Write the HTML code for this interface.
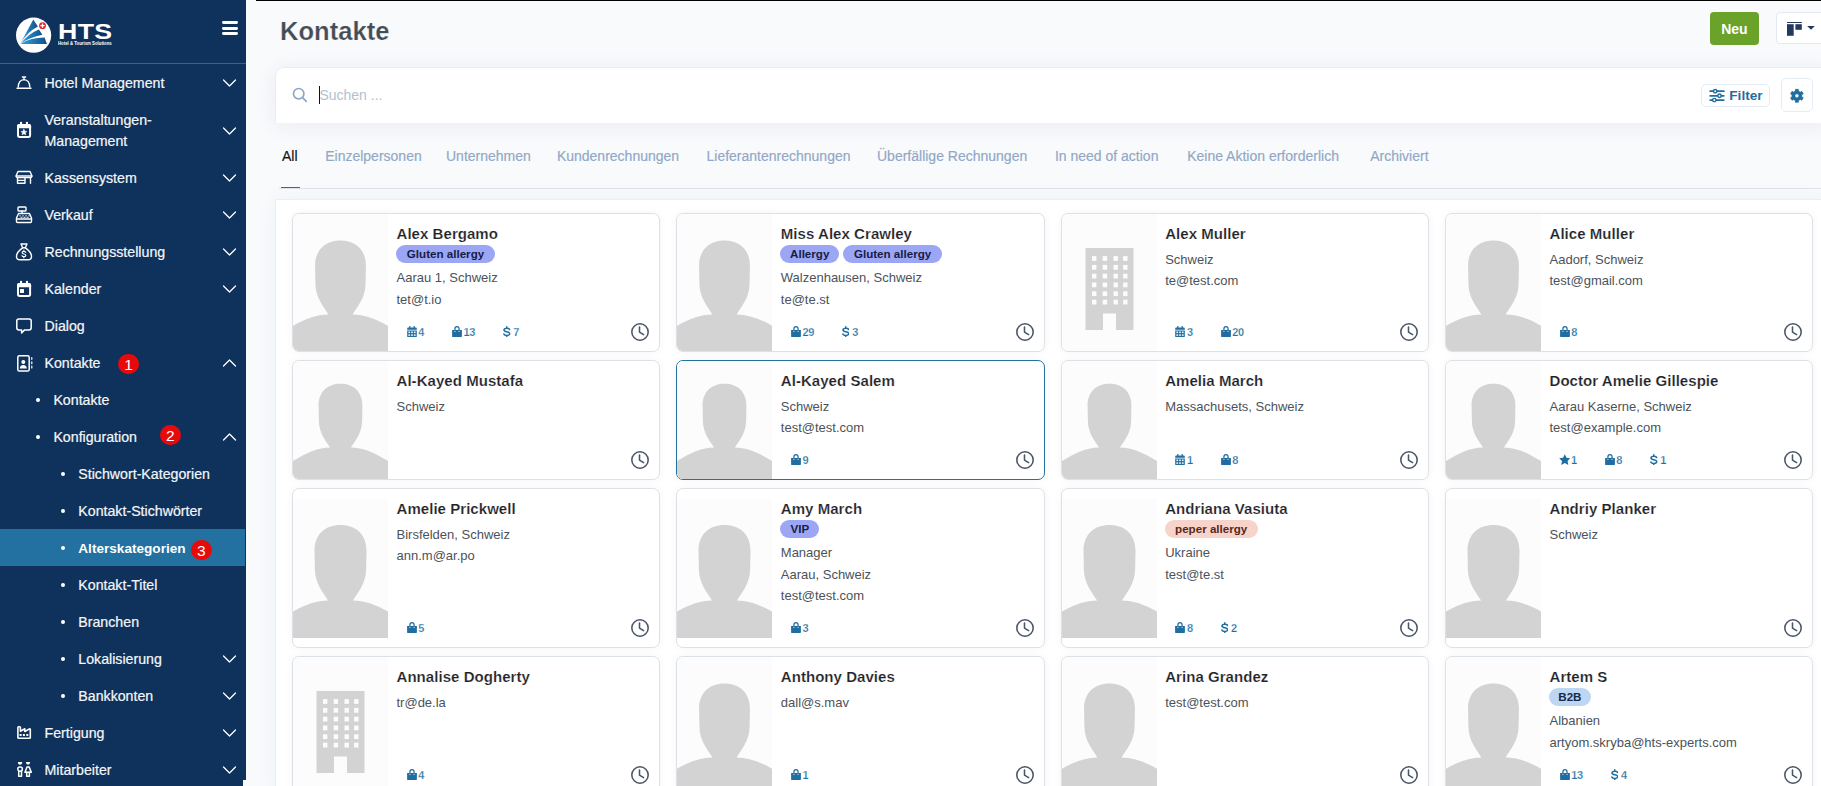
<!DOCTYPE html>
<html><head><meta charset="utf-8"><title>Kontakte</title>
<style>
html,body{margin:0;padding:0}
body{width:1821px;height:786px;overflow:hidden;position:relative;background:#f8fafc;font-family:"Liberation Sans", sans-serif}
.t{position:absolute;line-height:1;white-space:nowrap;font-family:"Liberation Sans", sans-serif}
</style></head><body>
<div style="position:absolute;left:0;top:0;width:246px;height:780px;background:#0f325c"></div>
<div style="position:absolute;left:0;top:780px;width:243px;height:6px;background:#0f325c"></div>
<div style="position:absolute;left:0;top:63px;width:246px;height:1px;background:rgba(255,255,255,0.22)"></div>
<svg style="position:absolute;left:0;top:0" width="130" height="63" viewBox="0 0 130 63">
<defs><linearGradient id="lg" x1="0" x2="1" y1="0" y2="0"><stop offset="0" stop-color="#36a3e0"/><stop offset="1" stop-color="#0f4f8a"/></linearGradient></defs>
<circle cx="33.6" cy="35.2" r="17.6" fill="#fff"/>
<path d="M20.4 43.4 L33.3 19.6 L37.9 26.6 Q27.5 32 20.4 43.4 Z" fill="url(#lg)"/>
<path d="M20.8 43.5 Q29 33.5 38.9 29.6 L42.4 34.8 Q29.5 37.5 20.8 43.5 Z" fill="url(#lg)"/>
<path d="M20.3 43.9 Q31 37.6 44.6 37.6 L46.9 43.9 Z" fill="url(#lg)"/>
<circle cx="42.5" cy="25.7" r="3.4" fill="#e3262b"/>
<path d="M42.5 23.6 V27.8 M40.4 25.7 H44.6" stroke="#fff" stroke-width="1.3"/>
</svg>
<div class="t" style="left:57.5px;top:21.4px;font-size:22px;font-weight:700;color:#fff;transform:scaleX(1.215);transform-origin:0 0;letter-spacing:0.3px">HTS</div>
<div class="t" style="left:57.7px;top:41.0px;font-size:5px;font-weight:700;color:#fff;transform:scaleX(0.86);transform-origin:0 0;white-space:nowrap">Hotel &amp; Tourism Solutions</div>
<div style="position:absolute;left:222px;top:21.2px;width:16px;height:2.8px;border-radius:1.4px;background:#fff"></div>
<div style="position:absolute;left:222px;top:26.8px;width:16px;height:2.8px;border-radius:1.4px;background:#fff"></div>
<div style="position:absolute;left:222px;top:32.4px;width:16px;height:2.8px;border-radius:1.4px;background:#fff"></div>
<div style="position:absolute;left:0;top:529px;width:245px;height:37px;background:#2371a0"></div>
<div class="t" style="left:44.50px;top:76.08px;font-size:14.2px;color:#f4f6f9;font-weight:400;-webkit-text-stroke:0.2px #f4f6f9">Hotel Management</div>
<svg style="position:absolute;left:222px;top:78.1px" width="15" height="10" viewBox="0 0 15 10" fill="none" stroke="#fff" stroke-width="1.4" stroke-linecap="round" stroke-linejoin="round"><path d="M1.5 2 L7.5 8 L13.5 2" stroke-width="1.25"/></svg>
<div class="t" style="left:44.50px;top:112.98px;font-size:14.2px;color:#f4f6f9;font-weight:400;-webkit-text-stroke:0.2px #f4f6f9">Veranstaltungen-</div>
<div class="t" style="left:44.50px;top:133.78px;font-size:14.2px;color:#f4f6f9;font-weight:400;-webkit-text-stroke:0.2px #f4f6f9">Management</div>
<div class="t" style="left:44.50px;top:171.18px;font-size:14.2px;color:#f4f6f9;font-weight:400;-webkit-text-stroke:0.2px #f4f6f9">Kassensystem</div>
<svg style="position:absolute;left:222px;top:173.2px" width="15" height="10" viewBox="0 0 15 10" fill="none" stroke="#fff" stroke-width="1.4" stroke-linecap="round" stroke-linejoin="round"><path d="M1.5 2 L7.5 8 L13.5 2" stroke-width="1.25"/></svg>
<div class="t" style="left:44.50px;top:207.98px;font-size:14.2px;color:#f4f6f9;font-weight:400;-webkit-text-stroke:0.2px #f4f6f9">Verkauf</div>
<svg style="position:absolute;left:222px;top:210.0px" width="15" height="10" viewBox="0 0 15 10" fill="none" stroke="#fff" stroke-width="1.4" stroke-linecap="round" stroke-linejoin="round"><path d="M1.5 2 L7.5 8 L13.5 2" stroke-width="1.25"/></svg>
<div class="t" style="left:44.50px;top:245.08px;font-size:14.2px;color:#f4f6f9;font-weight:400;-webkit-text-stroke:0.2px #f4f6f9">Rechnungsstellung</div>
<svg style="position:absolute;left:222px;top:247.10000000000002px" width="15" height="10" viewBox="0 0 15 10" fill="none" stroke="#fff" stroke-width="1.4" stroke-linecap="round" stroke-linejoin="round"><path d="M1.5 2 L7.5 8 L13.5 2" stroke-width="1.25"/></svg>
<div class="t" style="left:44.50px;top:282.08px;font-size:14.2px;color:#f4f6f9;font-weight:400;-webkit-text-stroke:0.2px #f4f6f9">Kalender</div>
<svg style="position:absolute;left:222px;top:284.1px" width="15" height="10" viewBox="0 0 15 10" fill="none" stroke="#fff" stroke-width="1.4" stroke-linecap="round" stroke-linejoin="round"><path d="M1.5 2 L7.5 8 L13.5 2" stroke-width="1.25"/></svg>
<div class="t" style="left:44.50px;top:319.08px;font-size:14.2px;color:#f4f6f9;font-weight:400;-webkit-text-stroke:0.2px #f4f6f9">Dialog</div>
<div class="t" style="left:44.50px;top:356.08px;font-size:14.2px;color:#f4f6f9;font-weight:400;-webkit-text-stroke:0.2px #f4f6f9">Kontakte</div>
<svg style="position:absolute;left:222px;top:358.1px" width="15" height="10" viewBox="0 0 15 10" fill="none" stroke="#fff" stroke-width="1.4" stroke-linecap="round" stroke-linejoin="round"><path d="M1.5 8 L7.5 2 L13.5 8" stroke-width="1.25"/></svg>
<div class="t" style="left:53.40px;top:392.98px;font-size:14.2px;color:#f4f6f9;font-weight:400;-webkit-text-stroke:0.2px #f4f6f9">Kontakte</div>
<div style="position:absolute;left:36.2px;top:398.1px;width:3.8px;height:3.8px;border-radius:50%;background:#fff"></div>
<div class="t" style="left:53.40px;top:429.98px;font-size:14.2px;color:#f4f6f9;font-weight:400;-webkit-text-stroke:0.2px #f4f6f9">Konfiguration</div>
<svg style="position:absolute;left:222px;top:432.0px" width="15" height="10" viewBox="0 0 15 10" fill="none" stroke="#fff" stroke-width="1.4" stroke-linecap="round" stroke-linejoin="round"><path d="M1.5 8 L7.5 2 L13.5 8" stroke-width="1.25"/></svg>
<div style="position:absolute;left:36.2px;top:435.1px;width:3.8px;height:3.8px;border-radius:50%;background:#fff"></div>
<div class="t" style="left:78.30px;top:466.98px;font-size:14.2px;color:#f4f6f9;font-weight:400;-webkit-text-stroke:0.2px #f4f6f9">Stichwort-Kategorien</div>
<div style="position:absolute;left:61.2px;top:472.1px;width:3.8px;height:3.8px;border-radius:50%;background:#fff"></div>
<div class="t" style="left:78.30px;top:503.98px;font-size:14.2px;color:#f4f6f9;font-weight:400;-webkit-text-stroke:0.2px #f4f6f9">Kontakt-Stichwörter</div>
<div style="position:absolute;left:61.2px;top:509.1px;width:3.8px;height:3.8px;border-radius:50%;background:#fff"></div>
<div class="t" style="left:78.30px;top:542.29px;font-size:13.6px;color:#ffffff;font-weight:700;">Alterskategorien</div>
<div style="position:absolute;left:61.2px;top:546.1px;width:3.8px;height:3.8px;border-radius:50%;background:#fff"></div>
<div class="t" style="left:78.30px;top:577.98px;font-size:14.2px;color:#f4f6f9;font-weight:400;-webkit-text-stroke:0.2px #f4f6f9">Kontakt-Titel</div>
<div style="position:absolute;left:61.2px;top:583.1px;width:3.8px;height:3.8px;border-radius:50%;background:#fff"></div>
<div class="t" style="left:78.30px;top:614.98px;font-size:14.2px;color:#f4f6f9;font-weight:400;-webkit-text-stroke:0.2px #f4f6f9">Branchen</div>
<div style="position:absolute;left:61.2px;top:620.1px;width:3.8px;height:3.8px;border-radius:50%;background:#fff"></div>
<div class="t" style="left:78.30px;top:651.98px;font-size:14.2px;color:#f4f6f9;font-weight:400;-webkit-text-stroke:0.2px #f4f6f9">Lokalisierung</div>
<svg style="position:absolute;left:222px;top:654.0px" width="15" height="10" viewBox="0 0 15 10" fill="none" stroke="#fff" stroke-width="1.4" stroke-linecap="round" stroke-linejoin="round"><path d="M1.5 2 L7.5 8 L13.5 2" stroke-width="1.25"/></svg>
<div style="position:absolute;left:61.2px;top:657.1px;width:3.8px;height:3.8px;border-radius:50%;background:#fff"></div>
<div class="t" style="left:78.30px;top:688.98px;font-size:14.2px;color:#f4f6f9;font-weight:400;-webkit-text-stroke:0.2px #f4f6f9">Bankkonten</div>
<svg style="position:absolute;left:222px;top:691.0px" width="15" height="10" viewBox="0 0 15 10" fill="none" stroke="#fff" stroke-width="1.4" stroke-linecap="round" stroke-linejoin="round"><path d="M1.5 2 L7.5 8 L13.5 2" stroke-width="1.25"/></svg>
<div style="position:absolute;left:61.2px;top:694.1px;width:3.8px;height:3.8px;border-radius:50%;background:#fff"></div>
<div class="t" style="left:44.50px;top:726.08px;font-size:14.2px;color:#f4f6f9;font-weight:400;-webkit-text-stroke:0.2px #f4f6f9">Fertigung</div>
<svg style="position:absolute;left:222px;top:728.1px" width="15" height="10" viewBox="0 0 15 10" fill="none" stroke="#fff" stroke-width="1.4" stroke-linecap="round" stroke-linejoin="round"><path d="M1.5 2 L7.5 8 L13.5 2" stroke-width="1.25"/></svg>
<div class="t" style="left:44.50px;top:763.18px;font-size:14.2px;color:#f4f6f9;font-weight:400;-webkit-text-stroke:0.2px #f4f6f9">Mitarbeiter</div>
<svg style="position:absolute;left:222px;top:765.2px" width="15" height="10" viewBox="0 0 15 10" fill="none" stroke="#fff" stroke-width="1.4" stroke-linecap="round" stroke-linejoin="round"><path d="M1.5 2 L7.5 8 L13.5 2" stroke-width="1.25"/></svg>
<svg style="position:absolute;left:222px;top:125.5px" width="15" height="10" viewBox="0 0 15 10" fill="none" stroke="#fff" stroke-width="1.4" stroke-linecap="round" stroke-linejoin="round"><path d="M1.5 2 L7.5 8 L13.5 2" stroke-width="1.25"/></svg>
<svg style="position:absolute;left:15px;top:75px" width="18" height="16" viewBox="0 0 18 16" fill="none" stroke="#fff" stroke-width="1.4" stroke-linecap="round" stroke-linejoin="round"><path d="M2 13.2 H16"/><path d="M3.2 12 Q3.5 5 9 4.6 Q14.5 5 14.8 12"/><path d="M7.4 2 H10.6 M9 2 V4.5"/></svg>
<svg style="position:absolute;left:15px;top:120px" width="18" height="19" viewBox="0 0 18 19" fill="none" stroke="#fff" stroke-width="1.4" stroke-linecap="round" stroke-linejoin="round"><rect x="3" y="5" width="12.1" height="11.9" rx="1.6" stroke-width="2"/><path d="M2 6.2 Q2 4 4.2 4 H13.9 Q16.1 4 16.1 6.2 V8.3 H2 Z" fill="#fff" stroke="none"/><rect x="5" y="1.9" width="2.1" height="2.6" fill="#fff" stroke="none"/><rect x="10.9" y="1.9" width="2.1" height="2.6" fill="#fff" stroke="none"/><path d="M8.9 9.3 L9.8 11.2 L11.9 11.4 L10.3 12.8 L10.8 14.9 L8.9 13.8 L7 14.9 L7.5 12.8 L5.9 11.4 L8 11.2 Z" fill="#fff" stroke="#fff" stroke-width="0.5"/></svg>
<svg style="position:absolute;left:15px;top:169px" width="18" height="17" viewBox="0 0 18 17" fill="none" stroke="#fff" stroke-width="1.4" stroke-linecap="round" stroke-linejoin="round"><path d="M3 2.5 H15 L17 7 H1 Z"/><path d="M1.2 7.2 Q1.2 8.6 2.6 8.6 H15.4 Q16.8 8.6 16.8 7.2"/><path d="M2.5 8.6 V14.2 H10 V8.6 M2.5 11.4 H10"/><path d="M15.5 8.6 V14.2"/></svg>
<svg style="position:absolute;left:15px;top:205px" width="18" height="19" viewBox="0 0 18 19" fill="none" stroke="#fff" stroke-width="1.4" stroke-linecap="round" stroke-linejoin="round"><rect x="3" y="2" width="8" height="4" rx="0.8"/><path d="M7 6 V8.2"/><path d="M3.5 8.5 H14.5 L16.5 13 V16.5 Q16.5 17.5 15.5 17.5 H2.5 Q1.5 17.5 1.5 16.5 V13 Z"/><path d="M1.5 14 H16.5"/><path d="M5 10.5 V11 M8 10.5 V11 M11 10.5 V11 M14 10.5 V11 M6 12.3 H7 M9 12.3 H10 M12 12.3 H13" stroke-width="1.1"/></svg>
<svg style="position:absolute;left:15px;top:242px" width="18" height="20" viewBox="0 0 18 20" fill="none" stroke="#fff" stroke-width="1.4" stroke-linecap="round" stroke-linejoin="round"><path d="M6 2 H12 L10.3 5.8 H7.7 Z"/><path d="M7.6 5.8 Q1.5 10 1.5 14.5 Q1.5 17.8 5 17.8 H13 Q16.5 17.8 16.5 14.5 Q16.5 10 10.4 5.8"/><path d="M8.9 8.2 V9.3 M8.9 14.7 V15.8 M10.7 10.4 Q10.4 9.3 8.9 9.3 Q7.1 9.3 7.1 10.6 Q7.1 11.7 8.9 12 Q10.8 12.3 10.8 13.5 Q10.8 14.7 8.9 14.7 Q7.3 14.7 7 13.6" stroke-width="1.2"/></svg>
<svg style="position:absolute;left:15px;top:279px" width="18" height="20" viewBox="0 0 18 20" fill="none" stroke="#fff" stroke-width="1.4" stroke-linecap="round" stroke-linejoin="round"><rect x="3" y="5" width="12.1" height="11.9" rx="1.6" stroke-width="2"/><path d="M2 6.2 Q2 4 4.2 4 H13.9 Q16.1 4 16.1 6.2 V8.3 H2 Z" fill="#fff" stroke="none"/><rect x="5" y="1.9" width="2.1" height="2.6" fill="#fff" stroke="none"/><rect x="10.9" y="1.9" width="2.1" height="2.6" fill="#fff" stroke="none"/><rect x="5" y="10" width="4" height="4" rx="0.5" fill="#fff" stroke="none"/></svg>
<svg style="position:absolute;left:15px;top:316px" width="19" height="20" viewBox="0 0 19 20" fill="none" stroke="#fff" stroke-width="1.4" stroke-linecap="round" stroke-linejoin="round"><path d="M3.9 2.9 H14.1 Q16.2 2.9 16.2 5 V11.8 Q16.2 13.9 14.1 13.9 H9.6 L6.6 16.9 V13.9 H3.9 Q1.8 13.9 1.8 11.8 V5 Q1.8 2.9 3.9 2.9 Z" stroke-width="1.5"/></svg>
<svg style="position:absolute;left:15px;top:354px" width="19" height="20" viewBox="0 0 19 20" fill="none" stroke="#fff" stroke-width="1.4" stroke-linecap="round" stroke-linejoin="round"><rect x="2.8" y="1.8" width="11.4" height="15.2" rx="1.6" stroke-width="1.5"/><circle cx="8.3" cy="8" r="2" fill="#fff" stroke="none"/><path d="M4.8 14.5 Q5 11 8.3 11 Q11.6 11 11.8 14.5 Z" fill="#fff" stroke="none"/><path d="M16.8 3.5 V5.3 M16.8 7.8 V9.7 M16.8 12.1 V14" stroke-width="1.2"/></svg>
<svg style="position:absolute;left:15px;top:724px" width="18" height="18" viewBox="0 0 18 18" fill="none" stroke="#fff" stroke-width="1.4" stroke-linecap="round" stroke-linejoin="round"><path d="M2.9 13.4 V3.6 Q2.9 2.8 3.7 2.8 H4.7 Q5.4 2.8 5.4 3.6 V7.2 L9.8 4.8 V7.5 L14.5 4.9 Q15.3 4.5 15.3 5.4 V13.4 Q15.3 14.3 14.4 14.3 H3.8 Q2.9 14.3 2.9 13.4 Z" stroke-width="1.6"/><rect x="4.6" y="10" width="2" height="2" fill="#fff" stroke="none"/><rect x="7.9" y="10" width="2" height="2" fill="#fff" stroke="none"/><rect x="11.3" y="10" width="2" height="2" fill="#fff" stroke="none"/></svg>
<svg style="position:absolute;left:15px;top:760px" width="18" height="19" viewBox="0 0 18 19" fill="none" stroke="#fff" stroke-width="1.4" stroke-linecap="round" stroke-linejoin="round"><path d="M2.9 2.1 H7.2 Q7.2 4.8 5.05 4.8 Q2.9 4.8 2.9 2.1 Z M11 2.1 H15.1 Q15.1 4.8 13.05 4.8 Q11 4.8 11 2.1 Z" fill="#fff" stroke="none"/><rect x="2.8" y="6.9" width="4.6" height="4.3" rx="2.1" stroke-width="1.5"/><path d="M3.7 11.3 V16.3 H6.5 V11.3" stroke-width="1.5"/><path d="M12.1 6.9 H14.1 L16.3 12.2 H9.9 Z" stroke-width="1.5"/><path d="M11.7 12.3 V16.3 H14.4 V12.3" stroke-width="1.5"/></svg>
<div style="position:absolute;left:118.24999999999999px;top:353.7px;width:20.4px;height:20.6px;border-radius:50%;background:#e70a0a"></div><div class="t" style="left:124.15px;top:356.68px;font-size:15.5px;color:#fff;font-weight:400;">1</div>
<div style="position:absolute;left:160.20000000000002px;top:424.9px;width:20.4px;height:20.6px;border-radius:50%;background:#e70a0a"></div><div class="t" style="left:166.10px;top:427.88px;font-size:15.5px;color:#fff;font-weight:400;">2</div>
<div style="position:absolute;left:191.20000000000002px;top:539.6px;width:20.4px;height:20.6px;border-radius:50%;background:#e70a0a"></div><div class="t" style="left:197.10px;top:542.58px;font-size:15.5px;color:#fff;font-weight:400;">3</div>
<div style="position:absolute;left:256px;top:0;width:1565px;height:1px;background:#000"></div>
<div class="t" style="left:280.00px;top:19.11px;font-size:25.5px;color:#464c55;font-weight:700;-webkit-text-stroke:0.22px #f8fafc;letter-spacing:0.05px">Kontakte</div>
<div style="position:absolute;left:1710px;top:12px;width:49px;height:33px;border-radius:4px;background:#6aa22a"></div>
<div class="t" style="left:1721.20px;top:21.95px;font-size:14px;color:#fff;font-weight:700;">Neu</div>
<div style="position:absolute;left:1775.5px;top:12.3px;width:60px;height:31.5px;border:1px solid #e3e9f2;border-radius:4px;background:#fff;box-sizing:border-box"></div>
<svg style="position:absolute;left:1786px;top:21px" width="30" height="16" viewBox="0 0 30 16"><rect x="1" y="1" width="14.8" height="1" fill="#233a5e"/><rect x="1" y="3.2" width="6.7" height="11.6" fill="#233a5e"/><rect x="9.4" y="3.2" width="6.4" height="5.6" fill="#233a5e"/><path d="M21.2 5 H28.8 L25 8.8 Z" fill="#233a5e"/></svg>
<div style="position:absolute;left:274.6px;top:67.0px;width:1560px;height:55.8px;background:#fff;border:1px solid #e8edf5;border-bottom:none;border-radius:9px 9px 0 0;box-sizing:border-box;box-shadow:0 3px 22px rgba(40,60,110,0.07)"></div>
<svg style="position:absolute;left:290px;top:85px" width="20" height="20" viewBox="0 0 20 20" fill="none" stroke="#8fa6c8" stroke-width="1.7" stroke-linecap="round"><circle cx="8.7" cy="8.7" r="5.2"/><path d="M12.6 12.6 L16.2 16.4"/></svg>
<div style="position:absolute;left:319px;top:86px;width:1.3px;height:18px;background:#111"></div>
<div class="t" style="left:319.40px;top:87.95px;font-size:14px;color:#b3bfcf;font-weight:400;">Suchen ...</div>
<div style="position:absolute;left:1701.3px;top:84.2px;width:69.2px;height:23.3px;border:1px solid #e6ecf5;border-radius:5px;box-sizing:border-box;background:#fff"></div>
<svg style="position:absolute;left:1708px;top:87px" width="18" height="18" viewBox="0 0 18 18" fill="none" stroke="#1f6e9f" stroke-width="1.8" stroke-linecap="round"><path d="M2.2 4.2 H5.4 M9 4.2 H15.8 M2.2 8.8 H9.7 M13.3 8.8 H15.8 M2.2 13.1 H4.5 M8.1 13.1 H15.8"/><circle cx="7.2" cy="4.2" r="1.75" stroke-width="1.4"/><circle cx="11.5" cy="8.8" r="1.75" stroke-width="1.4"/><circle cx="6.3" cy="13.1" r="1.75" stroke-width="1.4"/></svg>
<div class="t" style="left:1729.30px;top:88.89px;font-size:13.6px;color:#1f6e9f;font-weight:700;">Filter</div>
<div style="position:absolute;left:1781.2px;top:78.3px;width:31.6px;height:34.2px;border:1px solid #e6ecf5;border-radius:5px;box-sizing:border-box;background:#fff"></div>
<div class="t" style="left:282.00px;top:148.65px;font-size:14px;color:#111111;font-weight:400;-webkit-text-stroke:0.15px #111111">All</div>
<div class="t" style="left:325.20px;top:148.65px;font-size:14px;color:#91a7c6;font-weight:400;-webkit-text-stroke:0.15px #91a7c6">Einzelpersonen</div>
<div class="t" style="left:446.00px;top:148.65px;font-size:14px;color:#91a7c6;font-weight:400;-webkit-text-stroke:0.15px #91a7c6">Unternehmen</div>
<div class="t" style="left:556.90px;top:148.65px;font-size:14px;color:#91a7c6;font-weight:400;-webkit-text-stroke:0.15px #91a7c6">Kundenrechnungen</div>
<div class="t" style="left:706.50px;top:148.65px;font-size:14px;color:#91a7c6;font-weight:400;-webkit-text-stroke:0.15px #91a7c6">Lieferantenrechnungen</div>
<div class="t" style="left:877.00px;top:148.65px;font-size:14px;color:#91a7c6;font-weight:400;-webkit-text-stroke:0.15px #91a7c6">Überfällige Rechnungen</div>
<div class="t" style="left:1054.90px;top:148.65px;font-size:14px;color:#91a7c6;font-weight:400;-webkit-text-stroke:0.15px #91a7c6">In need of action</div>
<div class="t" style="left:1187.20px;top:148.65px;font-size:14px;color:#91a7c6;font-weight:400;-webkit-text-stroke:0.15px #91a7c6">Keine Aktion erforderlich</div>
<div class="t" style="left:1370.20px;top:148.65px;font-size:14px;color:#91a7c6;font-weight:400;-webkit-text-stroke:0.15px #91a7c6">Archiviert</div>
<div style="position:absolute;left:279px;top:188px;width:1542px;height:1px;background:#dfe4ea"></div>
<div style="position:absolute;left:281px;top:186.8px;width:19px;height:1.6px;background:#2472a6"></div>
<div style="position:absolute;left:274.7px;top:199.4px;width:1560px;height:600px;background:#fff;border:1px solid #eaeff6;box-sizing:border-box;box-shadow:0 0 22px rgba(40,60,110,0.045)"></div>
<svg style="position:absolute;left:1787px;top:86px" width="20" height="20" viewBox="0 0 20 20"><path fill="#1f6e9f" fill-rule="evenodd" stroke="#1f6e9f" stroke-width="0.8" stroke-linejoin="round" d="M8.51 5.00 L8.46 3.36 L11.34 3.36 L11.29 5.00 L13.36 6.19 L14.76 5.33 L16.20 7.83 L14.76 8.61 L14.76 10.99 L16.20 11.77 L14.76 14.27 L13.36 13.41 L11.29 14.60 L11.34 16.24 L8.46 16.24 L8.51 14.60 L6.44 13.41 L5.04 14.27 L3.60 11.77 L5.04 10.99 L5.04 8.61 L3.60 7.83 L5.04 5.33 L6.44 6.19 Z M12.00 9.80 A2.1 2.1 0 1 0 7.80 9.80 A2.1 2.1 0 1 0 12.00 9.80 Z"/></svg>
<div style="position:absolute;left:292.00px;top:213.00px;width:368.25px;height:139.00px;border:1px solid #dce1e8;border-radius:7px;box-sizing:border-box;background:#fff;box-shadow:0 0 8px rgba(20,30,60,0.045)"></div>
<div style="position:absolute;left:293.00px;top:214.00px;width:95px;height:137.00px;background:#fcfcfc;overflow:hidden;border-radius:6px 0 0 6px"><svg width="95" height="137.00" viewBox="-48.540 0 97.080 140.000" style="display:block"><path d="M-26 53 C-26 36 -15 27 0 27 C15 27 26 36 26 53 L25.6 72 C25.2 86 17 95 12.4 102.6 C30 103 46 111 70 128 L70 160 L-70 160 L-70 128 C-46 111 -30 103 -12.4 102.6 C-17 95 -25.2 86 -25.6 72 Z" fill="#d3d3d3"/></svg></div>
<div class="t" style="left:396.50px;top:225.90px;font-size:15px;color:#1e2227;font-weight:700;-webkit-text-stroke:0.18px #fff;letter-spacing:0.05px">Alex Bergamo</div>
<div style="position:absolute;left:396.00px;top:244.70px;width:99.0px;height:18px;border-radius:9px;background:#9ba6f5"></div>
<div class="t" style="left:396.00px;top:244.70px;width:99.0px;text-align:center;line-height:18px;font-size:11.6px;color:#181c45;font-weight:700">Gluten allergy</div>
<div class="t" style="left:396.50px;top:271.40px;font-size:13px;color:#4c525a;font-weight:400;">Aarau 1, Schweiz</div>
<div class="t" style="left:396.50px;top:292.90px;font-size:13px;color:#4c525a;font-weight:400;">tet@t.io</div>
<svg style="position:absolute;left:406.50px;top:325.90px" width="10" height="11.5" viewBox="0 0 10 11.5"><path fill="#1f6e9f" d="M2.2 0 H3.4 V1.5 H6.6 V0 H7.8 V1.5 H8.8 Q9.8 1.5 9.8 2.5 V3.8 H0.2 V2.5 Q0.2 1.5 1.2 1.5 H2.2 Z M0.2 4.5 H9.8 V10.3 Q9.8 11.4 8.8 11.4 H1.2 Q0.2 11.4 0.2 10.3 Z"/><g fill="#eaf3f9"><rect x="1.4" y="5.5" width="1.7" height="1.6"/><rect x="4.15" y="5.5" width="1.7" height="1.6"/><rect x="6.9" y="5.5" width="1.7" height="1.6"/><rect x="1.4" y="8.3" width="1.7" height="1.6"/><rect x="4.15" y="8.3" width="1.7" height="1.6"/><rect x="6.9" y="8.3" width="1.7" height="1.6"/></g></svg>
<div class="t" style="left:418.20px;top:326.69px;font-size:11px;color:#1f6e9f;font-weight:700;letter-spacing:-0.4px;-webkit-text-stroke:0.25px #fff">4</div>
<svg style="position:absolute;left:451.90px;top:325.70px" width="10" height="11.6" viewBox="0 0 10 11.6"><path fill="none" stroke="#1f6e9f" stroke-width="1.25" d="M2.9 4.2 V2.9 Q2.9 0.65 5 0.65 Q7.1 0.65 7.1 2.9 V4.2"/><path fill="#1f6e9f" d="M0.1 4.1 H9.9 V10.1 Q9.9 11.5 8.5 11.5 H1.5 Q0.1 11.5 0.1 10.1 Z"/><circle cx="2.9" cy="5.4" r="0.6" fill="#cfe3ef"/><circle cx="7.1" cy="5.4" r="0.6" fill="#cfe3ef"/></svg>
<div class="t" style="left:463.60px;top:326.69px;font-size:11px;color:#1f6e9f;font-weight:700;letter-spacing:-0.4px;-webkit-text-stroke:0.25px #fff">13</div>
<svg style="position:absolute;left:503.00px;top:325.70px" width="7.6" height="11.6" viewBox="0 0 7.6 11.6"><path fill="none" stroke="#1f6e9f" stroke-width="1.5" stroke-linecap="round" d="M3.8 0.8 V2.2 M3.8 9.4 V10.8 M6.6 3.6 Q6.4 2.2 3.8 2.2 Q1 2.2 1 4 Q1 5.3 3.8 5.8 Q6.7 6.3 6.7 7.7 Q6.7 9.4 3.8 9.4 Q1.1 9.4 0.9 7.9"/></svg>
<div class="t" style="left:513.30px;top:326.69px;font-size:11px;color:#1f6e9f;font-weight:700;letter-spacing:-0.4px;-webkit-text-stroke:0.25px #fff">7</div>
<svg style="position:absolute;left:630.25px;top:322.00px" width="20" height="20" viewBox="0 0 20 20" fill="none" stroke="#4a5568" stroke-width="1.55" stroke-linecap="round" stroke-linejoin="round"><circle cx="10" cy="10" r="8.2"/><path d="M9.5 5 V10.1 L13.6 12.7"/></svg>
<div style="position:absolute;left:676.30px;top:213.00px;width:368.25px;height:139.00px;border:1px solid #dce1e8;border-radius:7px;box-sizing:border-box;background:#fff;box-shadow:0 0 8px rgba(20,30,60,0.045)"></div>
<div style="position:absolute;left:677.30px;top:214.00px;width:95px;height:137.00px;background:#fcfcfc;overflow:hidden;border-radius:6px 0 0 6px"><svg width="95" height="137.00" viewBox="-48.540 0 97.080 140.000" style="display:block"><path d="M-26 53 C-26 36 -15 27 0 27 C15 27 26 36 26 53 L25.6 72 C25.2 86 17 95 12.4 102.6 C30 103 46 111 70 128 L70 160 L-70 160 L-70 128 C-46 111 -30 103 -12.4 102.6 C-17 95 -25.2 86 -25.6 72 Z" fill="#d3d3d3"/></svg></div>
<div class="t" style="left:780.80px;top:225.90px;font-size:15px;color:#1e2227;font-weight:700;-webkit-text-stroke:0.18px #fff;letter-spacing:0.05px">Miss Alex Crawley</div>
<div style="position:absolute;left:780.30px;top:244.70px;width:58.8px;height:18px;border-radius:9px;background:#9ba6f5"></div>
<div class="t" style="left:780.30px;top:244.70px;width:58.8px;text-align:center;line-height:18px;font-size:11.6px;color:#181c45;font-weight:700">Allergy</div>
<div style="position:absolute;left:843.10px;top:244.70px;width:99.0px;height:18px;border-radius:9px;background:#9ba6f5"></div>
<div class="t" style="left:843.10px;top:244.70px;width:99.0px;text-align:center;line-height:18px;font-size:11.6px;color:#181c45;font-weight:700">Gluten allergy</div>
<div class="t" style="left:780.80px;top:271.40px;font-size:13px;color:#4c525a;font-weight:400;">Walzenhausen, Schweiz</div>
<div class="t" style="left:780.80px;top:292.90px;font-size:13px;color:#4c525a;font-weight:400;">te@te.st</div>
<svg style="position:absolute;left:790.80px;top:325.70px" width="10" height="11.6" viewBox="0 0 10 11.6"><path fill="none" stroke="#1f6e9f" stroke-width="1.25" d="M2.9 4.2 V2.9 Q2.9 0.65 5 0.65 Q7.1 0.65 7.1 2.9 V4.2"/><path fill="#1f6e9f" d="M0.1 4.1 H9.9 V10.1 Q9.9 11.5 8.5 11.5 H1.5 Q0.1 11.5 0.1 10.1 Z"/><circle cx="2.9" cy="5.4" r="0.6" fill="#cfe3ef"/><circle cx="7.1" cy="5.4" r="0.6" fill="#cfe3ef"/></svg>
<div class="t" style="left:802.50px;top:326.69px;font-size:11px;color:#1f6e9f;font-weight:700;letter-spacing:-0.4px;-webkit-text-stroke:0.25px #fff">29</div>
<svg style="position:absolute;left:841.90px;top:325.70px" width="7.6" height="11.6" viewBox="0 0 7.6 11.6"><path fill="none" stroke="#1f6e9f" stroke-width="1.5" stroke-linecap="round" d="M3.8 0.8 V2.2 M3.8 9.4 V10.8 M6.6 3.6 Q6.4 2.2 3.8 2.2 Q1 2.2 1 4 Q1 5.3 3.8 5.8 Q6.7 6.3 6.7 7.7 Q6.7 9.4 3.8 9.4 Q1.1 9.4 0.9 7.9"/></svg>
<div class="t" style="left:852.20px;top:326.69px;font-size:11px;color:#1f6e9f;font-weight:700;letter-spacing:-0.4px;-webkit-text-stroke:0.25px #fff">3</div>
<svg style="position:absolute;left:1014.55px;top:322.00px" width="20" height="20" viewBox="0 0 20 20" fill="none" stroke="#4a5568" stroke-width="1.55" stroke-linecap="round" stroke-linejoin="round"><circle cx="10" cy="10" r="8.2"/><path d="M9.5 5 V10.1 L13.6 12.7"/></svg>
<div style="position:absolute;left:1060.70px;top:213.00px;width:368.25px;height:139.00px;border:1px solid #dce1e8;border-radius:7px;box-sizing:border-box;background:#fff;box-shadow:0 0 8px rgba(20,30,60,0.045)"></div>
<div style="position:absolute;left:1061.70px;top:214.00px;width:95px;height:137.00px;background:#fcfcfc;overflow:hidden;border-radius:6px 0 0 6px"><svg width="95" height="137.00" viewBox="-47.500 0 95.000 137.000" style="display:block"><path d="M-24 34 H24 V116 H6.5 V99.5 H-6.5 V116 H-24 Z" fill="#d3d3d3"/><rect x="-17.5" y="42.1" width="4.4" height="4.8" fill="#fcfcfc"/><rect x="-6.8" y="42.1" width="4.4" height="4.8" fill="#fcfcfc"/><rect x="4.0" y="42.1" width="4.4" height="4.8" fill="#fcfcfc"/><rect x="13.6" y="42.1" width="4.4" height="4.8" fill="#fcfcfc"/><rect x="-17.5" y="50.9" width="4.4" height="4.8" fill="#fcfcfc"/><rect x="-6.8" y="50.9" width="4.4" height="4.8" fill="#fcfcfc"/><rect x="4.0" y="50.9" width="4.4" height="4.8" fill="#fcfcfc"/><rect x="13.6" y="50.9" width="4.4" height="4.8" fill="#fcfcfc"/><rect x="-17.5" y="59.7" width="4.4" height="4.8" fill="#fcfcfc"/><rect x="-6.8" y="59.7" width="4.4" height="4.8" fill="#fcfcfc"/><rect x="4.0" y="59.7" width="4.4" height="4.8" fill="#fcfcfc"/><rect x="13.6" y="59.7" width="4.4" height="4.8" fill="#fcfcfc"/><rect x="-17.5" y="68.5" width="4.4" height="4.8" fill="#fcfcfc"/><rect x="-6.8" y="68.5" width="4.4" height="4.8" fill="#fcfcfc"/><rect x="4.0" y="68.5" width="4.4" height="4.8" fill="#fcfcfc"/><rect x="13.6" y="68.5" width="4.4" height="4.8" fill="#fcfcfc"/><rect x="-17.5" y="77.3" width="4.4" height="4.8" fill="#fcfcfc"/><rect x="-6.8" y="77.3" width="4.4" height="4.8" fill="#fcfcfc"/><rect x="4.0" y="77.3" width="4.4" height="4.8" fill="#fcfcfc"/><rect x="13.6" y="77.3" width="4.4" height="4.8" fill="#fcfcfc"/><rect x="-17.5" y="85.7" width="4.4" height="4.8" fill="#fcfcfc"/><rect x="-6.8" y="85.7" width="4.4" height="4.8" fill="#fcfcfc"/><rect x="4.0" y="85.7" width="4.4" height="4.8" fill="#fcfcfc"/><rect x="13.6" y="85.7" width="4.4" height="4.8" fill="#fcfcfc"/></svg></div>
<div class="t" style="left:1165.20px;top:225.90px;font-size:15px;color:#1e2227;font-weight:700;-webkit-text-stroke:0.18px #fff;letter-spacing:0.05px">Alex Muller</div>
<div class="t" style="left:1165.20px;top:252.90px;font-size:13px;color:#4c525a;font-weight:400;">Schweiz</div>
<div class="t" style="left:1165.20px;top:274.40px;font-size:13px;color:#4c525a;font-weight:400;">te@test.com</div>
<svg style="position:absolute;left:1175.20px;top:325.90px" width="10" height="11.5" viewBox="0 0 10 11.5"><path fill="#1f6e9f" d="M2.2 0 H3.4 V1.5 H6.6 V0 H7.8 V1.5 H8.8 Q9.8 1.5 9.8 2.5 V3.8 H0.2 V2.5 Q0.2 1.5 1.2 1.5 H2.2 Z M0.2 4.5 H9.8 V10.3 Q9.8 11.4 8.8 11.4 H1.2 Q0.2 11.4 0.2 10.3 Z"/><g fill="#eaf3f9"><rect x="1.4" y="5.5" width="1.7" height="1.6"/><rect x="4.15" y="5.5" width="1.7" height="1.6"/><rect x="6.9" y="5.5" width="1.7" height="1.6"/><rect x="1.4" y="8.3" width="1.7" height="1.6"/><rect x="4.15" y="8.3" width="1.7" height="1.6"/><rect x="6.9" y="8.3" width="1.7" height="1.6"/></g></svg>
<div class="t" style="left:1186.90px;top:326.69px;font-size:11px;color:#1f6e9f;font-weight:700;letter-spacing:-0.4px;-webkit-text-stroke:0.25px #fff">3</div>
<svg style="position:absolute;left:1220.60px;top:325.70px" width="10" height="11.6" viewBox="0 0 10 11.6"><path fill="none" stroke="#1f6e9f" stroke-width="1.25" d="M2.9 4.2 V2.9 Q2.9 0.65 5 0.65 Q7.1 0.65 7.1 2.9 V4.2"/><path fill="#1f6e9f" d="M0.1 4.1 H9.9 V10.1 Q9.9 11.5 8.5 11.5 H1.5 Q0.1 11.5 0.1 10.1 Z"/><circle cx="2.9" cy="5.4" r="0.6" fill="#cfe3ef"/><circle cx="7.1" cy="5.4" r="0.6" fill="#cfe3ef"/></svg>
<div class="t" style="left:1232.30px;top:326.69px;font-size:11px;color:#1f6e9f;font-weight:700;letter-spacing:-0.4px;-webkit-text-stroke:0.25px #fff">20</div>
<svg style="position:absolute;left:1398.95px;top:322.00px" width="20" height="20" viewBox="0 0 20 20" fill="none" stroke="#4a5568" stroke-width="1.55" stroke-linecap="round" stroke-linejoin="round"><circle cx="10" cy="10" r="8.2"/><path d="M9.5 5 V10.1 L13.6 12.7"/></svg>
<div style="position:absolute;left:1445.00px;top:213.00px;width:368.25px;height:139.00px;border:1px solid #dce1e8;border-radius:7px;box-sizing:border-box;background:#fff;box-shadow:0 0 8px rgba(20,30,60,0.045)"></div>
<div style="position:absolute;left:1446.00px;top:214.00px;width:95px;height:137.00px;background:#fcfcfc;overflow:hidden;border-radius:6px 0 0 6px"><svg width="95" height="137.00" viewBox="-48.540 0 97.080 140.000" style="display:block"><path d="M-26 53 C-26 36 -15 27 0 27 C15 27 26 36 26 53 L25.6 72 C25.2 86 17 95 12.4 102.6 C30 103 46 111 70 128 L70 160 L-70 160 L-70 128 C-46 111 -30 103 -12.4 102.6 C-17 95 -25.2 86 -25.6 72 Z" fill="#d3d3d3"/></svg></div>
<div class="t" style="left:1549.50px;top:225.90px;font-size:15px;color:#1e2227;font-weight:700;-webkit-text-stroke:0.18px #fff;letter-spacing:0.05px">Alice Muller</div>
<div class="t" style="left:1549.50px;top:252.90px;font-size:13px;color:#4c525a;font-weight:400;">Aadorf, Schweiz</div>
<div class="t" style="left:1549.50px;top:274.40px;font-size:13px;color:#4c525a;font-weight:400;">test@gmail.com</div>
<svg style="position:absolute;left:1559.50px;top:325.70px" width="10" height="11.6" viewBox="0 0 10 11.6"><path fill="none" stroke="#1f6e9f" stroke-width="1.25" d="M2.9 4.2 V2.9 Q2.9 0.65 5 0.65 Q7.1 0.65 7.1 2.9 V4.2"/><path fill="#1f6e9f" d="M0.1 4.1 H9.9 V10.1 Q9.9 11.5 8.5 11.5 H1.5 Q0.1 11.5 0.1 10.1 Z"/><circle cx="2.9" cy="5.4" r="0.6" fill="#cfe3ef"/><circle cx="7.1" cy="5.4" r="0.6" fill="#cfe3ef"/></svg>
<div class="t" style="left:1571.20px;top:326.69px;font-size:11px;color:#1f6e9f;font-weight:700;letter-spacing:-0.4px;-webkit-text-stroke:0.25px #fff">8</div>
<svg style="position:absolute;left:1783.25px;top:322.00px" width="20" height="20" viewBox="0 0 20 20" fill="none" stroke="#4a5568" stroke-width="1.55" stroke-linecap="round" stroke-linejoin="round"><circle cx="10" cy="10" r="8.2"/><path d="M9.5 5 V10.1 L13.6 12.7"/></svg>
<div style="position:absolute;left:292.00px;top:360.00px;width:368.25px;height:120.00px;border:1px solid #dce1e8;border-radius:7px;box-sizing:border-box;background:#fff;box-shadow:0 0 8px rgba(20,30,60,0.045)"></div>
<div style="position:absolute;left:293.00px;top:361.00px;width:95px;height:118.00px;background:#fcfcfc;overflow:hidden;border-radius:6px 0 0 6px"><svg width="95" height="118.00" viewBox="-56.356 0 112.712 140.000" style="display:block"><path d="M-26 53 C-26 36 -15 27 0 27 C15 27 26 36 26 53 L25.6 72 C25.2 86 17 95 12.4 102.6 C30 103 46 111 70 128 L70 160 L-70 160 L-70 128 C-46 111 -30 103 -12.4 102.6 C-17 95 -25.2 86 -25.6 72 Z" fill="#d3d3d3"/></svg></div>
<div class="t" style="left:396.50px;top:372.90px;font-size:15px;color:#1e2227;font-weight:700;-webkit-text-stroke:0.18px #fff;letter-spacing:0.05px">Al-Kayed Mustafa</div>
<div class="t" style="left:396.50px;top:399.90px;font-size:13px;color:#4c525a;font-weight:400;">Schweiz</div>
<svg style="position:absolute;left:630.25px;top:450.00px" width="20" height="20" viewBox="0 0 20 20" fill="none" stroke="#4a5568" stroke-width="1.55" stroke-linecap="round" stroke-linejoin="round"><circle cx="10" cy="10" r="8.2"/><path d="M9.5 5 V10.1 L13.6 12.7"/></svg>
<div style="position:absolute;left:676.30px;top:360.00px;width:368.25px;height:120.00px;border:1px solid #2171a1;border-radius:7px;box-sizing:border-box;background:#fff;box-shadow:0 0 8px rgba(20,30,60,0.045)"></div>
<div style="position:absolute;left:677.30px;top:361.00px;width:95px;height:118.00px;background:#fcfcfc;overflow:hidden;border-radius:6px 0 0 6px"><svg width="95" height="118.00" viewBox="-56.356 0 112.712 140.000" style="display:block"><path d="M-26 53 C-26 36 -15 27 0 27 C15 27 26 36 26 53 L25.6 72 C25.2 86 17 95 12.4 102.6 C30 103 46 111 70 128 L70 160 L-70 160 L-70 128 C-46 111 -30 103 -12.4 102.6 C-17 95 -25.2 86 -25.6 72 Z" fill="#d3d3d3"/></svg></div>
<div class="t" style="left:780.80px;top:372.90px;font-size:15px;color:#1e2227;font-weight:700;-webkit-text-stroke:0.18px #fff;letter-spacing:0.05px">Al-Kayed Salem</div>
<div class="t" style="left:780.80px;top:399.90px;font-size:13px;color:#4c525a;font-weight:400;">Schweiz</div>
<div class="t" style="left:780.80px;top:421.40px;font-size:13px;color:#4c525a;font-weight:400;">test@test.com</div>
<svg style="position:absolute;left:790.80px;top:453.70px" width="10" height="11.6" viewBox="0 0 10 11.6"><path fill="none" stroke="#1f6e9f" stroke-width="1.25" d="M2.9 4.2 V2.9 Q2.9 0.65 5 0.65 Q7.1 0.65 7.1 2.9 V4.2"/><path fill="#1f6e9f" d="M0.1 4.1 H9.9 V10.1 Q9.9 11.5 8.5 11.5 H1.5 Q0.1 11.5 0.1 10.1 Z"/><circle cx="2.9" cy="5.4" r="0.6" fill="#cfe3ef"/><circle cx="7.1" cy="5.4" r="0.6" fill="#cfe3ef"/></svg>
<div class="t" style="left:802.50px;top:454.69px;font-size:11px;color:#1f6e9f;font-weight:700;letter-spacing:-0.4px;-webkit-text-stroke:0.25px #fff">9</div>
<svg style="position:absolute;left:1014.55px;top:450.00px" width="20" height="20" viewBox="0 0 20 20" fill="none" stroke="#4a5568" stroke-width="1.55" stroke-linecap="round" stroke-linejoin="round"><circle cx="10" cy="10" r="8.2"/><path d="M9.5 5 V10.1 L13.6 12.7"/></svg>
<div style="position:absolute;left:1060.70px;top:360.00px;width:368.25px;height:120.00px;border:1px solid #dce1e8;border-radius:7px;box-sizing:border-box;background:#fff;box-shadow:0 0 8px rgba(20,30,60,0.045)"></div>
<div style="position:absolute;left:1061.70px;top:361.00px;width:95px;height:118.00px;background:#fcfcfc;overflow:hidden;border-radius:6px 0 0 6px"><svg width="95" height="118.00" viewBox="-56.356 0 112.712 140.000" style="display:block"><path d="M-26 53 C-26 36 -15 27 0 27 C15 27 26 36 26 53 L25.6 72 C25.2 86 17 95 12.4 102.6 C30 103 46 111 70 128 L70 160 L-70 160 L-70 128 C-46 111 -30 103 -12.4 102.6 C-17 95 -25.2 86 -25.6 72 Z" fill="#d3d3d3"/></svg></div>
<div class="t" style="left:1165.20px;top:372.90px;font-size:15px;color:#1e2227;font-weight:700;-webkit-text-stroke:0.18px #fff;letter-spacing:0.05px">Amelia March</div>
<div class="t" style="left:1165.20px;top:399.90px;font-size:13px;color:#4c525a;font-weight:400;">Massachusets, Schweiz</div>
<svg style="position:absolute;left:1175.20px;top:453.90px" width="10" height="11.5" viewBox="0 0 10 11.5"><path fill="#1f6e9f" d="M2.2 0 H3.4 V1.5 H6.6 V0 H7.8 V1.5 H8.8 Q9.8 1.5 9.8 2.5 V3.8 H0.2 V2.5 Q0.2 1.5 1.2 1.5 H2.2 Z M0.2 4.5 H9.8 V10.3 Q9.8 11.4 8.8 11.4 H1.2 Q0.2 11.4 0.2 10.3 Z"/><g fill="#eaf3f9"><rect x="1.4" y="5.5" width="1.7" height="1.6"/><rect x="4.15" y="5.5" width="1.7" height="1.6"/><rect x="6.9" y="5.5" width="1.7" height="1.6"/><rect x="1.4" y="8.3" width="1.7" height="1.6"/><rect x="4.15" y="8.3" width="1.7" height="1.6"/><rect x="6.9" y="8.3" width="1.7" height="1.6"/></g></svg>
<div class="t" style="left:1186.90px;top:454.69px;font-size:11px;color:#1f6e9f;font-weight:700;letter-spacing:-0.4px;-webkit-text-stroke:0.25px #fff">1</div>
<svg style="position:absolute;left:1220.60px;top:453.70px" width="10" height="11.6" viewBox="0 0 10 11.6"><path fill="none" stroke="#1f6e9f" stroke-width="1.25" d="M2.9 4.2 V2.9 Q2.9 0.65 5 0.65 Q7.1 0.65 7.1 2.9 V4.2"/><path fill="#1f6e9f" d="M0.1 4.1 H9.9 V10.1 Q9.9 11.5 8.5 11.5 H1.5 Q0.1 11.5 0.1 10.1 Z"/><circle cx="2.9" cy="5.4" r="0.6" fill="#cfe3ef"/><circle cx="7.1" cy="5.4" r="0.6" fill="#cfe3ef"/></svg>
<div class="t" style="left:1232.30px;top:454.69px;font-size:11px;color:#1f6e9f;font-weight:700;letter-spacing:-0.4px;-webkit-text-stroke:0.25px #fff">8</div>
<svg style="position:absolute;left:1398.95px;top:450.00px" width="20" height="20" viewBox="0 0 20 20" fill="none" stroke="#4a5568" stroke-width="1.55" stroke-linecap="round" stroke-linejoin="round"><circle cx="10" cy="10" r="8.2"/><path d="M9.5 5 V10.1 L13.6 12.7"/></svg>
<div style="position:absolute;left:1445.00px;top:360.00px;width:368.25px;height:120.00px;border:1px solid #dce1e8;border-radius:7px;box-sizing:border-box;background:#fff;box-shadow:0 0 8px rgba(20,30,60,0.045)"></div>
<div style="position:absolute;left:1446.00px;top:361.00px;width:95px;height:118.00px;background:#fcfcfc;overflow:hidden;border-radius:6px 0 0 6px"><svg width="95" height="118.00" viewBox="-56.356 0 112.712 140.000" style="display:block"><path d="M-26 53 C-26 36 -15 27 0 27 C15 27 26 36 26 53 L25.6 72 C25.2 86 17 95 12.4 102.6 C30 103 46 111 70 128 L70 160 L-70 160 L-70 128 C-46 111 -30 103 -12.4 102.6 C-17 95 -25.2 86 -25.6 72 Z" fill="#d3d3d3"/></svg></div>
<div class="t" style="left:1549.50px;top:372.90px;font-size:15px;color:#1e2227;font-weight:700;-webkit-text-stroke:0.18px #fff;letter-spacing:0.05px">Doctor Amelie Gillespie</div>
<div class="t" style="left:1549.50px;top:399.90px;font-size:13px;color:#4c525a;font-weight:400;">Aarau Kaserne, Schweiz</div>
<div class="t" style="left:1549.50px;top:421.40px;font-size:13px;color:#4c525a;font-weight:400;">test@example.com</div>
<svg style="position:absolute;left:1558.50px;top:453.60px" width="11.6" height="11.4" viewBox="0 0 11.6 11.4"><path fill="#1f6e9f" d="M5.8 0.2 L7.5 3.7 L11.4 4.2 L8.6 6.9 L9.3 10.9 L5.8 9 L2.3 10.9 L3 6.9 L0.2 4.2 L4.1 3.7 Z"/></svg>
<div class="t" style="left:1570.90px;top:454.69px;font-size:11px;color:#1f6e9f;font-weight:700;letter-spacing:-0.4px;-webkit-text-stroke:0.25px #fff">1</div>
<svg style="position:absolute;left:1604.60px;top:453.70px" width="10" height="11.6" viewBox="0 0 10 11.6"><path fill="none" stroke="#1f6e9f" stroke-width="1.25" d="M2.9 4.2 V2.9 Q2.9 0.65 5 0.65 Q7.1 0.65 7.1 2.9 V4.2"/><path fill="#1f6e9f" d="M0.1 4.1 H9.9 V10.1 Q9.9 11.5 8.5 11.5 H1.5 Q0.1 11.5 0.1 10.1 Z"/><circle cx="2.9" cy="5.4" r="0.6" fill="#cfe3ef"/><circle cx="7.1" cy="5.4" r="0.6" fill="#cfe3ef"/></svg>
<div class="t" style="left:1616.30px;top:454.69px;font-size:11px;color:#1f6e9f;font-weight:700;letter-spacing:-0.4px;-webkit-text-stroke:0.25px #fff">8</div>
<svg style="position:absolute;left:1650.00px;top:453.70px" width="7.6" height="11.6" viewBox="0 0 7.6 11.6"><path fill="none" stroke="#1f6e9f" stroke-width="1.5" stroke-linecap="round" d="M3.8 0.8 V2.2 M3.8 9.4 V10.8 M6.6 3.6 Q6.4 2.2 3.8 2.2 Q1 2.2 1 4 Q1 5.3 3.8 5.8 Q6.7 6.3 6.7 7.7 Q6.7 9.4 3.8 9.4 Q1.1 9.4 0.9 7.9"/></svg>
<div class="t" style="left:1660.30px;top:454.69px;font-size:11px;color:#1f6e9f;font-weight:700;letter-spacing:-0.4px;-webkit-text-stroke:0.25px #fff">1</div>
<svg style="position:absolute;left:1783.25px;top:450.00px" width="20" height="20" viewBox="0 0 20 20" fill="none" stroke="#4a5568" stroke-width="1.55" stroke-linecap="round" stroke-linejoin="round"><circle cx="10" cy="10" r="8.2"/><path d="M9.5 5 V10.1 L13.6 12.7"/></svg>
<div style="position:absolute;left:292.00px;top:488.00px;width:368.25px;height:160.00px;border:1px solid #dce1e8;border-radius:7px;box-sizing:border-box;background:#fff;box-shadow:0 0 8px rgba(20,30,60,0.045)"></div>
<div style="position:absolute;left:293.00px;top:498.00px;width:95px;height:140.00px;background:#fcfcfc;overflow:hidden;border-radius:0"><svg width="95" height="140.00" viewBox="-47.500 0 95.000 140.000" style="display:block"><path d="M-26 53 C-26 36 -15 27 0 27 C15 27 26 36 26 53 L25.6 72 C25.2 86 17 95 12.4 102.6 C30 103 46 111 70 128 L70 160 L-70 160 L-70 128 C-46 111 -30 103 -12.4 102.6 C-17 95 -25.2 86 -25.6 72 Z" fill="#d3d3d3"/></svg></div>
<div class="t" style="left:396.50px;top:500.90px;font-size:15px;color:#1e2227;font-weight:700;-webkit-text-stroke:0.18px #fff;letter-spacing:0.05px">Amelie Prickwell</div>
<div class="t" style="left:396.50px;top:527.90px;font-size:13px;color:#4c525a;font-weight:400;">Birsfelden, Schweiz</div>
<div class="t" style="left:396.50px;top:549.40px;font-size:13px;color:#4c525a;font-weight:400;">ann.m@ar.po</div>
<svg style="position:absolute;left:406.50px;top:621.70px" width="10" height="11.6" viewBox="0 0 10 11.6"><path fill="none" stroke="#1f6e9f" stroke-width="1.25" d="M2.9 4.2 V2.9 Q2.9 0.65 5 0.65 Q7.1 0.65 7.1 2.9 V4.2"/><path fill="#1f6e9f" d="M0.1 4.1 H9.9 V10.1 Q9.9 11.5 8.5 11.5 H1.5 Q0.1 11.5 0.1 10.1 Z"/><circle cx="2.9" cy="5.4" r="0.6" fill="#cfe3ef"/><circle cx="7.1" cy="5.4" r="0.6" fill="#cfe3ef"/></svg>
<div class="t" style="left:418.20px;top:622.69px;font-size:11px;color:#1f6e9f;font-weight:700;letter-spacing:-0.4px;-webkit-text-stroke:0.25px #fff">5</div>
<svg style="position:absolute;left:630.25px;top:618.00px" width="20" height="20" viewBox="0 0 20 20" fill="none" stroke="#4a5568" stroke-width="1.55" stroke-linecap="round" stroke-linejoin="round"><circle cx="10" cy="10" r="8.2"/><path d="M9.5 5 V10.1 L13.6 12.7"/></svg>
<div style="position:absolute;left:676.30px;top:488.00px;width:368.25px;height:160.00px;border:1px solid #dce1e8;border-radius:7px;box-sizing:border-box;background:#fff;box-shadow:0 0 8px rgba(20,30,60,0.045)"></div>
<div style="position:absolute;left:677.30px;top:498.00px;width:95px;height:140.00px;background:#fcfcfc;overflow:hidden;border-radius:0"><svg width="95" height="140.00" viewBox="-47.500 0 95.000 140.000" style="display:block"><path d="M-26 53 C-26 36 -15 27 0 27 C15 27 26 36 26 53 L25.6 72 C25.2 86 17 95 12.4 102.6 C30 103 46 111 70 128 L70 160 L-70 160 L-70 128 C-46 111 -30 103 -12.4 102.6 C-17 95 -25.2 86 -25.6 72 Z" fill="#d3d3d3"/></svg></div>
<div class="t" style="left:780.80px;top:500.90px;font-size:15px;color:#1e2227;font-weight:700;-webkit-text-stroke:0.18px #fff;letter-spacing:0.05px">Amy March</div>
<div style="position:absolute;left:780.30px;top:519.70px;width:39.1px;height:18px;border-radius:9px;background:#9ba6f5"></div>
<div class="t" style="left:780.30px;top:519.70px;width:39.1px;text-align:center;line-height:18px;font-size:11.6px;color:#181c45;font-weight:700">VIP</div>
<div class="t" style="left:780.80px;top:546.40px;font-size:13px;color:#4c525a;font-weight:400;">Manager</div>
<div class="t" style="left:780.80px;top:567.90px;font-size:13px;color:#4c525a;font-weight:400;">Aarau, Schweiz</div>
<div class="t" style="left:780.80px;top:589.40px;font-size:13px;color:#4c525a;font-weight:400;">test@test.com</div>
<svg style="position:absolute;left:790.80px;top:621.70px" width="10" height="11.6" viewBox="0 0 10 11.6"><path fill="none" stroke="#1f6e9f" stroke-width="1.25" d="M2.9 4.2 V2.9 Q2.9 0.65 5 0.65 Q7.1 0.65 7.1 2.9 V4.2"/><path fill="#1f6e9f" d="M0.1 4.1 H9.9 V10.1 Q9.9 11.5 8.5 11.5 H1.5 Q0.1 11.5 0.1 10.1 Z"/><circle cx="2.9" cy="5.4" r="0.6" fill="#cfe3ef"/><circle cx="7.1" cy="5.4" r="0.6" fill="#cfe3ef"/></svg>
<div class="t" style="left:802.50px;top:622.69px;font-size:11px;color:#1f6e9f;font-weight:700;letter-spacing:-0.4px;-webkit-text-stroke:0.25px #fff">3</div>
<svg style="position:absolute;left:1014.55px;top:618.00px" width="20" height="20" viewBox="0 0 20 20" fill="none" stroke="#4a5568" stroke-width="1.55" stroke-linecap="round" stroke-linejoin="round"><circle cx="10" cy="10" r="8.2"/><path d="M9.5 5 V10.1 L13.6 12.7"/></svg>
<div style="position:absolute;left:1060.70px;top:488.00px;width:368.25px;height:160.00px;border:1px solid #dce1e8;border-radius:7px;box-sizing:border-box;background:#fff;box-shadow:0 0 8px rgba(20,30,60,0.045)"></div>
<div style="position:absolute;left:1061.70px;top:498.00px;width:95px;height:140.00px;background:#fcfcfc;overflow:hidden;border-radius:0"><svg width="95" height="140.00" viewBox="-47.500 0 95.000 140.000" style="display:block"><path d="M-26 53 C-26 36 -15 27 0 27 C15 27 26 36 26 53 L25.6 72 C25.2 86 17 95 12.4 102.6 C30 103 46 111 70 128 L70 160 L-70 160 L-70 128 C-46 111 -30 103 -12.4 102.6 C-17 95 -25.2 86 -25.6 72 Z" fill="#d3d3d3"/></svg></div>
<div class="t" style="left:1165.20px;top:500.90px;font-size:15px;color:#1e2227;font-weight:700;-webkit-text-stroke:0.18px #fff;letter-spacing:0.05px">Andriana Vasiuta</div>
<div style="position:absolute;left:1164.70px;top:519.70px;width:93.0px;height:18px;border-radius:9px;background:#f7d3c9"></div>
<div class="t" style="left:1164.70px;top:519.70px;width:93.0px;text-align:center;line-height:18px;font-size:11.6px;color:#55281d;font-weight:700">peper allergy</div>
<div class="t" style="left:1165.20px;top:546.40px;font-size:13px;color:#4c525a;font-weight:400;">Ukraine</div>
<div class="t" style="left:1165.20px;top:567.90px;font-size:13px;color:#4c525a;font-weight:400;">test@te.st</div>
<svg style="position:absolute;left:1175.20px;top:621.70px" width="10" height="11.6" viewBox="0 0 10 11.6"><path fill="none" stroke="#1f6e9f" stroke-width="1.25" d="M2.9 4.2 V2.9 Q2.9 0.65 5 0.65 Q7.1 0.65 7.1 2.9 V4.2"/><path fill="#1f6e9f" d="M0.1 4.1 H9.9 V10.1 Q9.9 11.5 8.5 11.5 H1.5 Q0.1 11.5 0.1 10.1 Z"/><circle cx="2.9" cy="5.4" r="0.6" fill="#cfe3ef"/><circle cx="7.1" cy="5.4" r="0.6" fill="#cfe3ef"/></svg>
<div class="t" style="left:1186.90px;top:622.69px;font-size:11px;color:#1f6e9f;font-weight:700;letter-spacing:-0.4px;-webkit-text-stroke:0.25px #fff">8</div>
<svg style="position:absolute;left:1220.60px;top:621.70px" width="7.6" height="11.6" viewBox="0 0 7.6 11.6"><path fill="none" stroke="#1f6e9f" stroke-width="1.5" stroke-linecap="round" d="M3.8 0.8 V2.2 M3.8 9.4 V10.8 M6.6 3.6 Q6.4 2.2 3.8 2.2 Q1 2.2 1 4 Q1 5.3 3.8 5.8 Q6.7 6.3 6.7 7.7 Q6.7 9.4 3.8 9.4 Q1.1 9.4 0.9 7.9"/></svg>
<div class="t" style="left:1230.90px;top:622.69px;font-size:11px;color:#1f6e9f;font-weight:700;letter-spacing:-0.4px;-webkit-text-stroke:0.25px #fff">2</div>
<svg style="position:absolute;left:1398.95px;top:618.00px" width="20" height="20" viewBox="0 0 20 20" fill="none" stroke="#4a5568" stroke-width="1.55" stroke-linecap="round" stroke-linejoin="round"><circle cx="10" cy="10" r="8.2"/><path d="M9.5 5 V10.1 L13.6 12.7"/></svg>
<div style="position:absolute;left:1445.00px;top:488.00px;width:368.25px;height:160.00px;border:1px solid #dce1e8;border-radius:7px;box-sizing:border-box;background:#fff;box-shadow:0 0 8px rgba(20,30,60,0.045)"></div>
<div style="position:absolute;left:1446.00px;top:498.00px;width:95px;height:140.00px;background:#fcfcfc;overflow:hidden;border-radius:0"><svg width="95" height="140.00" viewBox="-47.500 0 95.000 140.000" style="display:block"><path d="M-26 53 C-26 36 -15 27 0 27 C15 27 26 36 26 53 L25.6 72 C25.2 86 17 95 12.4 102.6 C30 103 46 111 70 128 L70 160 L-70 160 L-70 128 C-46 111 -30 103 -12.4 102.6 C-17 95 -25.2 86 -25.6 72 Z" fill="#d3d3d3"/></svg></div>
<div class="t" style="left:1549.50px;top:500.90px;font-size:15px;color:#1e2227;font-weight:700;-webkit-text-stroke:0.18px #fff;letter-spacing:0.05px">Andriy Planker</div>
<div class="t" style="left:1549.50px;top:527.90px;font-size:13px;color:#4c525a;font-weight:400;">Schweiz</div>
<svg style="position:absolute;left:1783.25px;top:618.00px" width="20" height="20" viewBox="0 0 20 20" fill="none" stroke="#4a5568" stroke-width="1.55" stroke-linecap="round" stroke-linejoin="round"><circle cx="10" cy="10" r="8.2"/><path d="M9.5 5 V10.1 L13.6 12.7"/></svg>
<div style="position:absolute;left:292.00px;top:656.00px;width:368.25px;height:139.00px;border:1px solid #dce1e8;border-radius:7px;box-sizing:border-box;background:#fff;box-shadow:0 0 8px rgba(20,30,60,0.045)"></div>
<div style="position:absolute;left:293.00px;top:657.00px;width:95px;height:137.00px;background:#fcfcfc;overflow:hidden;border-radius:6px 0 0 6px"><svg width="95" height="137.00" viewBox="-47.500 0 95.000 137.000" style="display:block"><path d="M-24 34 H24 V116 H6.5 V99.5 H-6.5 V116 H-24 Z" fill="#d3d3d3"/><rect x="-17.5" y="42.1" width="4.4" height="4.8" fill="#fcfcfc"/><rect x="-6.8" y="42.1" width="4.4" height="4.8" fill="#fcfcfc"/><rect x="4.0" y="42.1" width="4.4" height="4.8" fill="#fcfcfc"/><rect x="13.6" y="42.1" width="4.4" height="4.8" fill="#fcfcfc"/><rect x="-17.5" y="50.9" width="4.4" height="4.8" fill="#fcfcfc"/><rect x="-6.8" y="50.9" width="4.4" height="4.8" fill="#fcfcfc"/><rect x="4.0" y="50.9" width="4.4" height="4.8" fill="#fcfcfc"/><rect x="13.6" y="50.9" width="4.4" height="4.8" fill="#fcfcfc"/><rect x="-17.5" y="59.7" width="4.4" height="4.8" fill="#fcfcfc"/><rect x="-6.8" y="59.7" width="4.4" height="4.8" fill="#fcfcfc"/><rect x="4.0" y="59.7" width="4.4" height="4.8" fill="#fcfcfc"/><rect x="13.6" y="59.7" width="4.4" height="4.8" fill="#fcfcfc"/><rect x="-17.5" y="68.5" width="4.4" height="4.8" fill="#fcfcfc"/><rect x="-6.8" y="68.5" width="4.4" height="4.8" fill="#fcfcfc"/><rect x="4.0" y="68.5" width="4.4" height="4.8" fill="#fcfcfc"/><rect x="13.6" y="68.5" width="4.4" height="4.8" fill="#fcfcfc"/><rect x="-17.5" y="77.3" width="4.4" height="4.8" fill="#fcfcfc"/><rect x="-6.8" y="77.3" width="4.4" height="4.8" fill="#fcfcfc"/><rect x="4.0" y="77.3" width="4.4" height="4.8" fill="#fcfcfc"/><rect x="13.6" y="77.3" width="4.4" height="4.8" fill="#fcfcfc"/><rect x="-17.5" y="85.7" width="4.4" height="4.8" fill="#fcfcfc"/><rect x="-6.8" y="85.7" width="4.4" height="4.8" fill="#fcfcfc"/><rect x="4.0" y="85.7" width="4.4" height="4.8" fill="#fcfcfc"/><rect x="13.6" y="85.7" width="4.4" height="4.8" fill="#fcfcfc"/></svg></div>
<div class="t" style="left:396.50px;top:668.90px;font-size:15px;color:#1e2227;font-weight:700;-webkit-text-stroke:0.18px #fff;letter-spacing:0.05px">Annalise Dogherty</div>
<div class="t" style="left:396.50px;top:695.90px;font-size:13px;color:#4c525a;font-weight:400;">tr@de.la</div>
<svg style="position:absolute;left:406.50px;top:768.70px" width="10" height="11.6" viewBox="0 0 10 11.6"><path fill="none" stroke="#1f6e9f" stroke-width="1.25" d="M2.9 4.2 V2.9 Q2.9 0.65 5 0.65 Q7.1 0.65 7.1 2.9 V4.2"/><path fill="#1f6e9f" d="M0.1 4.1 H9.9 V10.1 Q9.9 11.5 8.5 11.5 H1.5 Q0.1 11.5 0.1 10.1 Z"/><circle cx="2.9" cy="5.4" r="0.6" fill="#cfe3ef"/><circle cx="7.1" cy="5.4" r="0.6" fill="#cfe3ef"/></svg>
<div class="t" style="left:418.20px;top:769.69px;font-size:11px;color:#1f6e9f;font-weight:700;letter-spacing:-0.4px;-webkit-text-stroke:0.25px #fff">4</div>
<svg style="position:absolute;left:630.25px;top:765.00px" width="20" height="20" viewBox="0 0 20 20" fill="none" stroke="#4a5568" stroke-width="1.55" stroke-linecap="round" stroke-linejoin="round"><circle cx="10" cy="10" r="8.2"/><path d="M9.5 5 V10.1 L13.6 12.7"/></svg>
<div style="position:absolute;left:676.30px;top:656.00px;width:368.25px;height:139.00px;border:1px solid #dce1e8;border-radius:7px;box-sizing:border-box;background:#fff;box-shadow:0 0 8px rgba(20,30,60,0.045)"></div>
<div style="position:absolute;left:677.30px;top:657.00px;width:95px;height:137.00px;background:#fcfcfc;overflow:hidden;border-radius:6px 0 0 6px"><svg width="95" height="137.00" viewBox="-48.540 0 97.080 140.000" style="display:block"><path d="M-26 53 C-26 36 -15 27 0 27 C15 27 26 36 26 53 L25.6 72 C25.2 86 17 95 12.4 102.6 C30 103 46 111 70 128 L70 160 L-70 160 L-70 128 C-46 111 -30 103 -12.4 102.6 C-17 95 -25.2 86 -25.6 72 Z" fill="#d3d3d3"/></svg></div>
<div class="t" style="left:780.80px;top:668.90px;font-size:15px;color:#1e2227;font-weight:700;-webkit-text-stroke:0.18px #fff;letter-spacing:0.05px">Anthony Davies</div>
<div class="t" style="left:780.80px;top:695.90px;font-size:13px;color:#4c525a;font-weight:400;">dall@s.mav</div>
<svg style="position:absolute;left:790.80px;top:768.70px" width="10" height="11.6" viewBox="0 0 10 11.6"><path fill="none" stroke="#1f6e9f" stroke-width="1.25" d="M2.9 4.2 V2.9 Q2.9 0.65 5 0.65 Q7.1 0.65 7.1 2.9 V4.2"/><path fill="#1f6e9f" d="M0.1 4.1 H9.9 V10.1 Q9.9 11.5 8.5 11.5 H1.5 Q0.1 11.5 0.1 10.1 Z"/><circle cx="2.9" cy="5.4" r="0.6" fill="#cfe3ef"/><circle cx="7.1" cy="5.4" r="0.6" fill="#cfe3ef"/></svg>
<div class="t" style="left:802.50px;top:769.69px;font-size:11px;color:#1f6e9f;font-weight:700;letter-spacing:-0.4px;-webkit-text-stroke:0.25px #fff">1</div>
<svg style="position:absolute;left:1014.55px;top:765.00px" width="20" height="20" viewBox="0 0 20 20" fill="none" stroke="#4a5568" stroke-width="1.55" stroke-linecap="round" stroke-linejoin="round"><circle cx="10" cy="10" r="8.2"/><path d="M9.5 5 V10.1 L13.6 12.7"/></svg>
<div style="position:absolute;left:1060.70px;top:656.00px;width:368.25px;height:139.00px;border:1px solid #dce1e8;border-radius:7px;box-sizing:border-box;background:#fff;box-shadow:0 0 8px rgba(20,30,60,0.045)"></div>
<div style="position:absolute;left:1061.70px;top:657.00px;width:95px;height:137.00px;background:#fcfcfc;overflow:hidden;border-radius:6px 0 0 6px"><svg width="95" height="137.00" viewBox="-48.540 0 97.080 140.000" style="display:block"><path d="M-26 53 C-26 36 -15 27 0 27 C15 27 26 36 26 53 L25.6 72 C25.2 86 17 95 12.4 102.6 C30 103 46 111 70 128 L70 160 L-70 160 L-70 128 C-46 111 -30 103 -12.4 102.6 C-17 95 -25.2 86 -25.6 72 Z" fill="#d3d3d3"/></svg></div>
<div class="t" style="left:1165.20px;top:668.90px;font-size:15px;color:#1e2227;font-weight:700;-webkit-text-stroke:0.18px #fff;letter-spacing:0.05px">Arina Grandez</div>
<div class="t" style="left:1165.20px;top:695.90px;font-size:13px;color:#4c525a;font-weight:400;">test@test.com</div>
<svg style="position:absolute;left:1398.95px;top:765.00px" width="20" height="20" viewBox="0 0 20 20" fill="none" stroke="#4a5568" stroke-width="1.55" stroke-linecap="round" stroke-linejoin="round"><circle cx="10" cy="10" r="8.2"/><path d="M9.5 5 V10.1 L13.6 12.7"/></svg>
<div style="position:absolute;left:1445.00px;top:656.00px;width:368.25px;height:139.00px;border:1px solid #dce1e8;border-radius:7px;box-sizing:border-box;background:#fff;box-shadow:0 0 8px rgba(20,30,60,0.045)"></div>
<div style="position:absolute;left:1446.00px;top:657.00px;width:95px;height:137.00px;background:#fcfcfc;overflow:hidden;border-radius:6px 0 0 6px"><svg width="95" height="137.00" viewBox="-48.540 0 97.080 140.000" style="display:block"><path d="M-26 53 C-26 36 -15 27 0 27 C15 27 26 36 26 53 L25.6 72 C25.2 86 17 95 12.4 102.6 C30 103 46 111 70 128 L70 160 L-70 160 L-70 128 C-46 111 -30 103 -12.4 102.6 C-17 95 -25.2 86 -25.6 72 Z" fill="#d3d3d3"/></svg></div>
<div class="t" style="left:1549.50px;top:668.90px;font-size:15px;color:#1e2227;font-weight:700;-webkit-text-stroke:0.18px #fff;letter-spacing:0.05px">Artem S</div>
<div style="position:absolute;left:1549.00px;top:687.70px;width:41.8px;height:18px;border-radius:9px;background:#bcd6f4"></div>
<div class="t" style="left:1549.00px;top:687.70px;width:41.8px;text-align:center;line-height:18px;font-size:11.6px;color:#18294a;font-weight:700">B2B</div>
<div class="t" style="left:1549.50px;top:714.40px;font-size:13px;color:#4c525a;font-weight:400;">Albanien</div>
<div class="t" style="left:1549.50px;top:735.90px;font-size:13px;color:#4c525a;font-weight:400;">artyom.skryba@hts-experts.com</div>
<svg style="position:absolute;left:1559.50px;top:768.70px" width="10" height="11.6" viewBox="0 0 10 11.6"><path fill="none" stroke="#1f6e9f" stroke-width="1.25" d="M2.9 4.2 V2.9 Q2.9 0.65 5 0.65 Q7.1 0.65 7.1 2.9 V4.2"/><path fill="#1f6e9f" d="M0.1 4.1 H9.9 V10.1 Q9.9 11.5 8.5 11.5 H1.5 Q0.1 11.5 0.1 10.1 Z"/><circle cx="2.9" cy="5.4" r="0.6" fill="#cfe3ef"/><circle cx="7.1" cy="5.4" r="0.6" fill="#cfe3ef"/></svg>
<div class="t" style="left:1571.20px;top:769.69px;font-size:11px;color:#1f6e9f;font-weight:700;letter-spacing:-0.4px;-webkit-text-stroke:0.25px #fff">13</div>
<svg style="position:absolute;left:1610.60px;top:768.70px" width="7.6" height="11.6" viewBox="0 0 7.6 11.6"><path fill="none" stroke="#1f6e9f" stroke-width="1.5" stroke-linecap="round" d="M3.8 0.8 V2.2 M3.8 9.4 V10.8 M6.6 3.6 Q6.4 2.2 3.8 2.2 Q1 2.2 1 4 Q1 5.3 3.8 5.8 Q6.7 6.3 6.7 7.7 Q6.7 9.4 3.8 9.4 Q1.1 9.4 0.9 7.9"/></svg>
<div class="t" style="left:1620.90px;top:769.69px;font-size:11px;color:#1f6e9f;font-weight:700;letter-spacing:-0.4px;-webkit-text-stroke:0.25px #fff">4</div>
<svg style="position:absolute;left:1783.25px;top:765.00px" width="20" height="20" viewBox="0 0 20 20" fill="none" stroke="#4a5568" stroke-width="1.55" stroke-linecap="round" stroke-linejoin="round"><circle cx="10" cy="10" r="8.2"/><path d="M9.5 5 V10.1 L13.6 12.7"/></svg>
</body></html>
